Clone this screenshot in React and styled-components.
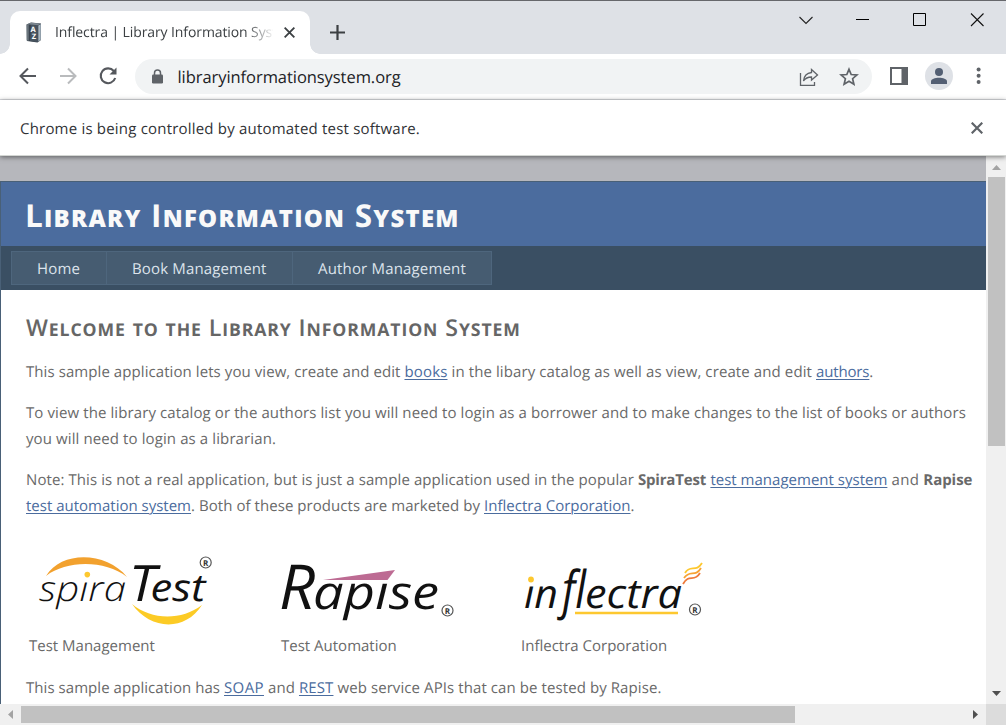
import React from "react";
import styled, { createGlobalStyle } from "styled-components";

const Global = createGlobalStyle`
  * { box-sizing: border-box; }
  html, body { margin: 0; padding: 0; overflow: hidden; }
  body { font-family: "Open Sans", "Noto Sans", sans-serif; text-rendering: geometricPrecision; }
`;

const Window = styled.div`
  width: 1006px;
  height: 725px;
  display: flex;
  flex-direction: column;
  background: #fff;
  overflow: hidden;
`;

const TabStrip = styled.div`
  height: 54px;
  flex: none;
  display: flex;
  align-items: flex-end;
  padding-left: 10px;
  background: #dee1e6;
  border-top: 1px solid #66676b;
`;

const Tab = styled.div`
  position: relative;
  width: 300px;
  height: 43px;
  display: flex;
  align-items: center;
  padding: 0 12px 0 15px;
  background: #fff;
  border-radius: 10px 10px 0 0;
  &::before, &::after {
    content: "";
    position: absolute;
    bottom: 0;
    width: 10px;
    height: 10px;
  }
  &::before { left: -10px; background: radial-gradient(circle at 0 0, transparent 9.5px, #fff 10px); }
  &::after { right: -10px; background: radial-gradient(circle at 100% 0, transparent 9.5px, #fff 10px); }
`;

const TabTitle = styled.span`
  width: 218px;
  margin-left: 12px;
  overflow: hidden;
  white-space: nowrap;
  font-size: 14px;
  color: #3c4043;
  mask-image: linear-gradient(90deg, #000 190px, transparent 220px);
`;

const TabClose = styled.div`
  display: flex;
  margin-left: 11px;
`;

const NewTab = styled.div`
  display: flex;
  align-self: center;
  margin: 10px 0 0 20px;
`;

const WindowControls = styled.div`
  display: flex;
  align-self: flex-start;
  gap: 42px;
  margin: 11px 22px 0 auto;
`;

const Toolbar = styled.div`
  height: 46px;
  flex: none;
  display: flex;
  align-items: center;
  padding: 0 18px 0 18px;
  border-bottom: 1px solid #dadce0;
`;

const NavButtons = styled.div`
  display: flex;
  gap: 20px;
  margin-bottom: 1px;
`;

const Omnibox = styled.div`
  width: 737px;
  height: 35px;
  margin-left: 17px;
  display: flex;
  align-items: center;
  padding: 0 13px 0 15px;
  border-radius: 18px;
  background: #f1f3f4;
`;

const Url = styled.span`
  flex: 1;
  margin-left: 13.5px;
  font-size: 16.5px;
  color: #202124;
`;

const OmniboxActions = styled.div`
  display: flex;
  gap: 20px;
`;

const Actions = styled.div`
  flex: 1;
  display: flex;
  align-items: center;
  justify-content: flex-end;
  gap: 17px;
  margin-bottom: 1px;
`;

const Avatar = styled.div`
  width: 28px;
  height: 28px;
  border-radius: 50%;
  background: #dee1e6;
  display: flex;
  align-items: center;
  justify-content: center;
`;

const InfoBar = styled.div`
  position: relative;
  z-index: 1;
  height: 56px;
  flex: none;
  display: flex;
  align-items: center;
  justify-content: space-between;
  padding: 0 23px 0 20px;
  font-size: 15px;
  line-height: 22px;
  color: #303236;
  background: #fff;
  border-bottom: 1px solid #d3d6d3;
  box-shadow: 0 1px 5px rgba(0, 0, 0, 0.5);
`;

const Viewport = styled.div`
  flex: 1;
  min-height: 0;
  display: grid;
  grid-template-columns: 986px 20px;
  grid-template-rows: 548px 21px;
`;

const Page = styled.div`
  overflow: hidden;
  padding-top: 25px;
  background: #b6b7bc;
`;

const Site = styled.div`
  height: 523px;
  border: solid #496077;
  border-width: 1px 0 0 1px;
  background: #fff;
`;

const Header = styled.header`
  height: 64px;
  padding: 9px 0 0 24px;
  background: #4b6c9e;
`;

const SiteTitle = styled.h1`
  margin: 0;
  font-size: 31.5px;
  line-height: 50px;
  font-weight: 750;
  color: #f9f9f9;
  white-space: nowrap;
`;

const Small = styled.span`
  font-size: 0.76em;
  line-height: 0;
  font-weight: ${(p) => p.$weight};
  text-transform: uppercase;
`;

const Menu = styled.nav`
  height: 44px;
  display: flex;
  padding: 5px 10px;
  background: #3a4f63;
`;

const MenuItem = styled.a`
  width: ${(p) => p.$width}px;
  height: 34px;
  margin-right: -1px;
  padding-left: 25px;
  border: 1px solid #4e667d;
  background: #465c71;
  color: #dde4ec;
  font-size: 15px;
  line-height: 34px;
  white-space: nowrap;
`;

const Content = styled.main`
  padding: 19px 0 0 25px;
  color: #696969;
  font-size: 15px;
  line-height: 26px;
`;

const Welcome = styled.h2`
  margin: 0 0 14px;
  font-size: 23.2px;
  line-height: 36px;
  font-weight: 600;
  color: #666;
  white-space: nowrap;
`;

const Paragraph = styled.p`
  margin: 0 0 15px;
`;

const Line = styled.span`
  display: block;
  white-space: nowrap;
`;

const Text = styled.span`
  white-space: pre;
  letter-spacing: ${(p) => p.$spacing || 0}px;
`;

const Notice = styled(Text)`
  margin-top: 2px;
`;

const Link = styled.a`
  color: #4b6c9e;
  text-decoration: underline;
  text-underline-offset: 2px;
  text-decoration-thickness: 1px;
`;

const Products = styled.div`
  display: grid;
  grid-template-columns: 252px 240px 220px;
  padding: 12px 0 0 3px;
  margin-bottom: 16px;
`;

const Product = styled.div`
  display: flex;
  flex-direction: column;
  align-items: flex-start;
`;

const VScroll = styled.div`
  display: flex;
  flex-direction: column;
  align-items: center;
  justify-content: space-between;
  padding: 0 0 8px;
  background: #f0f0f0;
`;

const VThumb = styled.div`
  width: 17px;
  height: 269px;
  margin: 7px 0 auto 1px;
  background: #c1c1c1;
`;

const HScroll = styled.div`
  display: flex;
  align-items: center;
  padding: 0 7px;
  background: #f0f0f0;
`;

const HThumb = styled.div`
  width: 774px;
  height: 17px;
  margin: 0 auto 0 8px;
  background: #c1c1c1;
`;

const Corner = styled.div`
  background: #dcdcdc;
`;

const Arrow = styled.svg`
  display: block;
  flex: none;
  margin-top: ${(p) => p.$top || 0}px;
`;

function Cross({ size, stroke, width = 1.2 }) {
  return (
    <svg width={size} height={size} viewBox="0 0 12 12" fill="none" stroke={stroke} strokeWidth={width}>
      <path d="M.7.7 11.3 11.3M11.3.7.7 11.3" />
    </svg>
  );
}

const SmallCaps = ({ text, weight }) =>
  text.split(/([a-z]+)/).map((part, i) => (i % 2 ? <Small key={i} $weight={weight}>{part}</Small> : part));

const Favicon = () => (
  <svg width="18" height="21" viewBox="0 0 18 21">
    <path d="M1.5 2.5 6 .5 16 1.5V18L12.5 20.5 2 19Z" fill="#39434d" />
    <path d="M6 2.5 13 3.5V20L5 19Z" fill="#46525e" />
    <path d="M3 2.3V18.7M1.8 2.7V18.5" stroke="#8d979e" strokeWidth=".9" />
    <path d="M13.3 3.5V19.5L15.8 17.8V2Z" fill="#aab9c4" />
    <path d="M2 2.3 6 .7 15.5 1.6 13 3.2Z" fill="#7c8790" />
    <g fill="#fff" fontFamily="Open Sans, sans-serif" fontWeight="700">
      <text x="5.4" y="9.8" fontSize="7.5">A</text>
      <text x="6.8" y="17.4" fontSize="7.5">Z</text>
    </g>
  </svg>
);

const Logo = styled.svg`
  display: block;
  width: 190px;
  height: 87px;
  overflow: visible;
  font-family: "Open Sans", "Noto Sans", sans-serif;
  font-style: italic;
  fill: #111;
`;

const Registered = ({ x, y }) => (
  <g>
    <circle cx={x} cy={y} r="5.5" fill="none" stroke="#555" strokeWidth="1.2" />
    <text x={x - 2.7} y={y + 3} fontSize="8" fontStyle="normal" fontWeight="700" fill="#333">R</text>
  </g>
);

const Stretch = ({ x, y, size, width, children, ...rest }) => (
  <text x={x} y={y} fontSize={size} textLength={width} lengthAdjust="spacingAndGlyphs" {...rest}>{children}</text>
);

const SpiraLogo = () => (
  <Logo viewBox="29 546 190 87">
    <Stretch x={39} y={600.5} size={35} width={87} fontWeight="360">spıra</Stretch>
    <Stretch x={129} y={601} size={50} width={27} fontWeight="420">T</Stretch>
    <Stretch x={150.5} y={601} size={38} width={55} fontWeight="420">est</Stretch>
    <path d="M46 576C62 550 107 552 127 577C105 560 67 560 46 576Z" fill="#f2a12e" />
    <circle cx="87.3" cy="574.6" r="2.8" fill="#fdc82f" />
    <path d="M132 604C151 620 181 621 202 605C185 632 150 630 132 604Z" fill="#fccb25" />
    <Registered x={205.7} y={562.5} />
  </Logo>
);

const RapiseLogo = () => (
  <Logo viewBox="281 546 190 87">
    <Stretch x={279} y={609} size={62} width={36} fontWeight="460">R</Stretch>
    <Stretch x={313} y={609} size={47} width={126} fontWeight="460">apıse</Stretch>
    <path d="M323 580 395 570 387.5 580Z" fill="#bd6b93" />
    <Registered x={447.5} y={610.5} />
  </Logo>
);

const InflectraLogo = () => (
  <Logo viewBox="521 546 190 87">
    <Stretch x={524} y={608} size={40} width={34}>ın</Stretch>
    <Stretch x={562} y={608} size={52} width={24}>fl</Stretch>
    <Stretch x={585} y={608} size={41} width={97}>ectra</Stretch>
    <circle cx="531" cy="579.5" r="2.9" fill="#fdc82f" />
    <path d="M575 613H678" stroke="#fdc82f" strokeWidth="2.6" />
    <g fill="none" strokeWidth="1.8">
      <path d="M685 573C690 564 696 573 702 563" stroke="#fdc82f" />
      <path d="M684 578C690 569 695 578 701 568" stroke="#f7a233" />
      <path d="M683 584C689 573 694 583 700 573" stroke="#ee7a3b" />
    </g>
    <Registered x={695} y={609.5} />
  </Logo>
);

export default function App() {
  return (
    <Window>
      <Global />
      <TabStrip>
        <Tab>
          <Favicon />
          <TabTitle><Text $spacing={-0.1}>Inflectra | Library Information System</Text></TabTitle>
          <TabClose><Cross size={11} stroke="#3c4043" width={2} /></TabClose>
        </Tab>
        <NewTab>
          <svg width="15" height="15" viewBox="0 0 15 15"><path d="M7.5 0V15M0 7.5H15" stroke="#3c4043" strokeWidth="2.2" /></svg>
        </NewTab>
        <WindowControls>
          <svg width="15" height="15" viewBox="0 0 15 15" fill="none" stroke="#222" strokeWidth="1.1"><path d="M1.5 5 8 11.5 14.5 5" /></svg>
          <svg width="15" height="15" viewBox="0 0 15 15"><path d="M1 7.5H14" stroke="#000" /></svg>
          <svg width="15" height="15" viewBox="0 0 15 15"><path d="M1.5 1.5H13.5V13.5H1.5Z" fill="none" stroke="#000" /></svg>
          <svg width="15" height="15" viewBox="0 0 15 15"><path d="M2 1.5 14.5 14M14.5 1.5 2 14" stroke="#111" strokeWidth="1.1" /></svg>
        </WindowControls>
      </TabStrip>
      <Toolbar>
        <NavButtons>
          <svg width="20" height="20" viewBox="0 0 20 20" fill="none" stroke="#55585d" strokeWidth="2"><path d="M18 10H3M10 2.5 2.5 10 10 17.5" /></svg>
          <svg width="20" height="20" viewBox="0 0 20 20" fill="none" stroke="#b9bbbd" strokeWidth="2"><path d="M2 10H17M10 2.5 17.5 10 10 17.5" /></svg>
          <svg width="20" height="20" viewBox="0 0 20 20" fill="none" stroke="#55585d" strokeWidth="2.1"><path d="M15.8 5A7.4 7.4 0 1 0 17.2 12" /><path d="M18.5 1.5V8.5H11.5Z" fill="#55585d" stroke="none" /></svg>
        </NavButtons>
        <Omnibox>
          <svg width="14" height="16" viewBox="0 0 14 16"><rect x="2" y="5.5" width="11" height="9" rx="1.2" fill="#5f6368" /><path d="M4.5 6V4A3 3 0 0 1 10.5 4V6" fill="none" stroke="#5f6368" strokeWidth="1.5" /></svg>
          <Url><Text $spacing={-0.06}>libraryinformationsystem.org</Text></Url>
          <OmniboxActions>
            <svg width="20" height="20" viewBox="0 0 20 20" fill="none" stroke="#5f6368" strokeWidth="1.3"><path d="M1.5 6V18.3H15.5V15" /><path d="M12.5 2.5 18.5 8 12.5 13V10C9 10 6.5 11 4.5 14C5 9 8 6 12.5 5.5Z" /></svg>
            <svg width="20" height="20" viewBox="0 0 20 20" fill="none" stroke="#5f6368" strokeWidth="1.7"><path d="M10 2.3 12.2 7.5 17.9 8 13.6 11.7 14.9 17.2 10 14.3 5.1 17.2 6.4 11.7 2.1 8 7.8 7.5Z" /></svg>
          </OmniboxActions>
        </Omnibox>
        <Actions>
          <svg width="18" height="18" viewBox="0 0 18 18"><path d="M0 0H18V18H0ZM2 2V16H11.5V2Z" fill="#5f6368" fillRule="evenodd" /></svg>
          <Avatar>
            <svg width="18" height="18" viewBox="0 0 18 18" fill="#535f73"><circle cx="9" cy="5" r="4" /><path d="M1 17V14.5C1 9.5 17 9.5 17 14.5V17Z" /></svg>
          </Avatar>
          <svg width="18" height="18" viewBox="0 0 18 18" fill="#5f6368"><circle cx="8.6" cy="2.5" r="2" /><circle cx="8.6" cy="8.7" r="2" /><circle cx="8.6" cy="15" r="2" /></svg>
        </Actions>
      </Toolbar>
      <InfoBar>
        <Notice $spacing={0.2}>Chrome is being controlled by automated test software.</Notice>
        <Cross size={12} stroke="#5f6368" width={2.2} />
      </InfoBar>
      <Viewport>
        <Page>
          <Site>
            <Header>
              <SiteTitle><Text $spacing={1.24}><SmallCaps weight={800} text="Library Information System" /></Text></SiteTitle>
            </Header>
            <Menu>
              <MenuItem $width={96}><Text $spacing={0.15}>Home</Text></MenuItem>
              <MenuItem $width={187}><Text $spacing={0.15}>Book Management</Text></MenuItem>
              <MenuItem $width={200}><Text $spacing={0.17}>Author Management</Text></MenuItem>
            </Menu>
            <Content>
              <Welcome><Text $spacing={0.89}><SmallCaps weight={680} text="Welcome to the Library Information System" /></Text></Welcome>
              <Paragraph>
                <Line>
                  <Text $spacing={0.076}>This sample application lets you view, create and edit </Text>
                  <Link><Text $spacing={0.15}>books</Text></Link>
                  <Text $spacing={0.104}> in the libary catalog as well as view, create and edit </Text>
                  <Link><Text $spacing={-0.15}>authors</Text></Link>.
                </Line>
              </Paragraph>
              <Paragraph>
                <Line><Text $spacing={0.098}>To view the library catalog or the authors list you will need to login as a borrower and to make changes to the list of books or authors</Text></Line>
                <Line><Text $spacing={0.106}>you will need to login as a librarian.</Text></Line>
              </Paragraph>
              <Paragraph>
                <Line>
                  <Text $spacing={0.084}>Note: This is not a real application, but is just a sample application used in the popular </Text>
                  <b><Text $spacing={-0.19}>SpiraTest</Text></b>
                  <Text $spacing={0.5}> </Text>
                  <Link><Text $spacing={0.013}>test management system</Text></Link>
                  <Text $spacing={0.29}> and </Text>
                  <b><Text $spacing={-0.06}>Rapise</Text></b>
                </Line>
                <Line>
                  <Link><Text>test automation system</Text></Link>
                  <Text $spacing={0.059}>. Both of these products are marketed by </Text>
                  <Link><Text $spacing={0.016}>Inflectra Corporation</Text></Link>.
                </Line>
              </Paragraph>
              <Products>
                <Product><SpiraLogo /><Text>Test Management</Text></Product>
                <Product><RapiseLogo /><Text>Test Automation</Text></Product>
                <Product><InflectraLogo /><Text>Inflectra Corporation</Text></Product>
              </Products>
              <Line>
                <Text $spacing={0.051}>This sample application has </Text>
                <Link><Text $spacing={0.39}>SOAP</Text></Link>
                <Text $spacing={0.097}> and </Text>
                <Link><Text $spacing={0.1}>REST</Text></Link>
                <Text $spacing={0.087}> web service APIs that can be tested by Rapise.</Text>
              </Line>
            </Content>
          </Site>
        </Page>
        <VScroll>
          <Arrow $top={9} width="9" height="5" viewBox="0 0 9 5"><path d="M0 5 4.5 0 9 5Z" fill="#a3a3a3" /></Arrow>
          <VThumb />
          <Arrow width="9" height="5" viewBox="0 0 9 5"><path d="M0 0 4.5 5 9 0Z" fill="#505050" /></Arrow>
        </VScroll>
        <HScroll>
          <Arrow width="6" height="9" viewBox="0 0 6 9"><path d="M6 0 1 4.5 6 9Z" fill="#a3a3a3" /></Arrow>
          <HThumb />
          <Arrow width="6" height="9" viewBox="0 0 6 9"><path d="M0 0 5 4.5 0 9Z" fill="#505050" /></Arrow>
        </HScroll>
        <Corner />
      </Viewport>
    </Window>
  );
}
